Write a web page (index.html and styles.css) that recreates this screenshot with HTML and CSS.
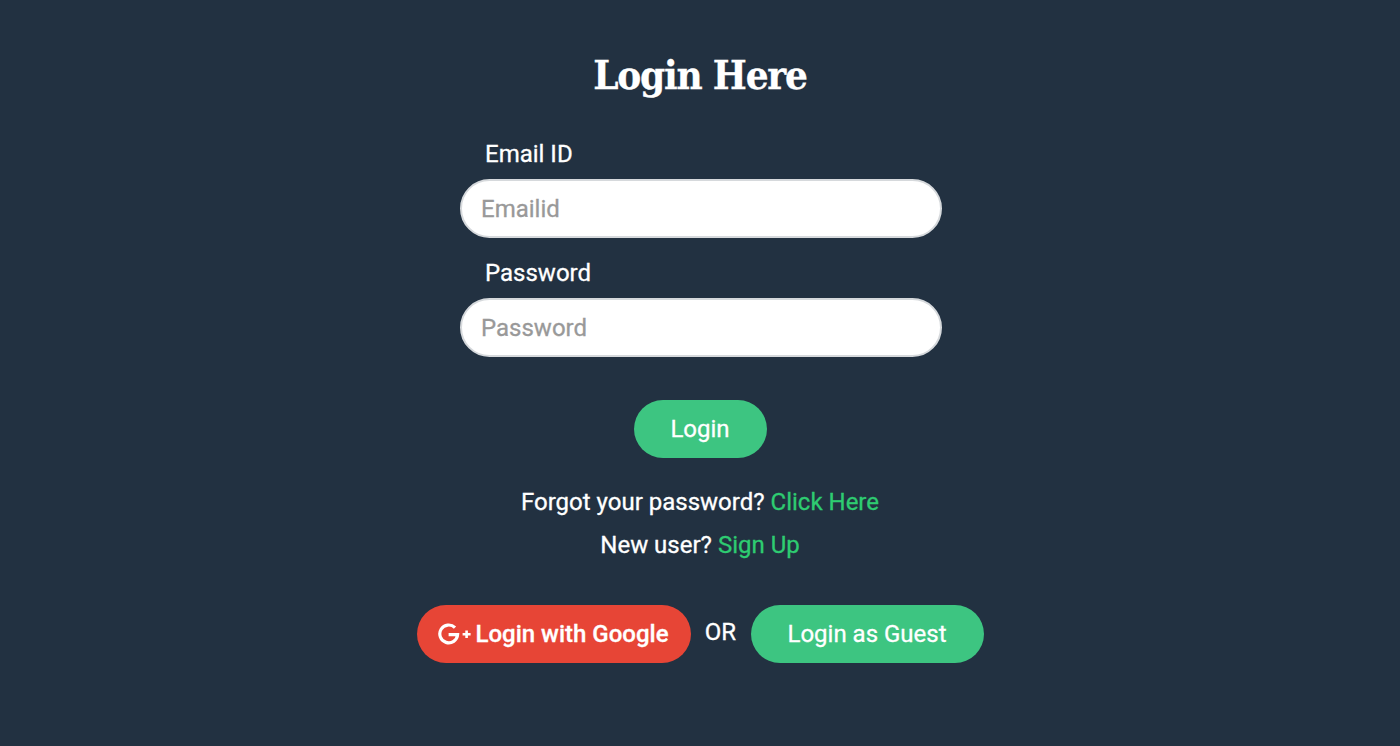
FILE: index.html
```html
<!DOCTYPE html>
<html lang="en">
<head>
<meta charset="UTF-8">
<meta name="viewport" content="width=device-width, initial-scale=1.0">
<title>Login Here</title>
<link rel="stylesheet" href="styles.css">
</head>
<body>
<div class="login">
  <h1 class="login-title">Login Here</h1>

  <form class="login-form">
    <div class="field">
      <label class="field-label" for="email">Email ID</label>
      <input type="text" class="field-input" id="email" placeholder="Emailid">
    </div>
    <div class="field">
      <label class="field-label" for="password">Password</label>
      <input type="password" class="field-input" id="password" placeholder="Password">
    </div>
    <button type="button" class="button green submit">Login</button>
  </form>

  <p class="note forgot">Forgot your password? <a href="#">Click Here</a></p>
  <p class="note signup">New user? <a href="#">Sign Up</a></p>

  <div class="alt-logins">
    <button type="button" class="button red google">
      <svg class="gplus" viewBox="0 0 33 22" width="33" height="22" aria-hidden="true">
        <path d="M17 4.6A8.9 8.9 0 1 0 19.6 11.6H10.6" fill="none" stroke="#fff" stroke-width="3.2"/>
        <path d="M24.6 11.2h8M28.6 7.4v7.6" fill="none" stroke="#fff" stroke-width="2.6"/>
      </svg>
      Login with Google
    </button>
    <span class="or">OR</span>
    <button type="button" class="button green guest">Login as Guest</button>
  </div>
</div>
</body>
</html>
```

FILE: styles.css
```css
body {
  margin: 0;
  height: 746px;
  overflow: hidden;
  background-color: #223141;
  color: #fff;
  font-family: Roboto, "Liberation Sans", sans-serif;
  font-size: 24px;
  -webkit-text-stroke: 0.3px;
}
.login {
  display: flex;
  flex-direction: column;
  align-items: center;
  padding-top: 50px;
}
.login-title {
  margin: 0;
  height: 50px;
  line-height: 50px;
  font-family: "DejaVu Serif Condensed", "DejaVu Serif", serif;
  font-size: 40px;
  font-weight: 700;
  letter-spacing: -1.2px;
}
.login-form {
  display: flex;
  flex-direction: column;
  align-items: center;
  margin-top: 40px;
}
.field {
  width: 482px;
  margin: 0 0 21px 2px;
}
.field-label {
  display: block;
  height: 28px;
  line-height: 28px;
  margin: 0 0 11px 25px;
  font-size: 24px;
}
.field-input {
  display: block;
  box-sizing: border-box;
  width: 482px;
  height: 59px;
  padding: 0 19px;
  border: 2px solid #d6d9dc;
  border-radius: 30px;
  background-color: #fff;
  font-family: inherit;
  font-size: 24px;
  color: #333;
  outline: none;
}
.field-input::placeholder {
  color: #999;
  opacity: 1;
}
.button {
  display: inline-flex;
  align-items: center;
  justify-content: center;
  box-sizing: border-box;
  height: 58px;
  border: none;
  border-radius: 29px;
  color: #fff;
  font-family: inherit;
  font-size: 24px;
  cursor: pointer;
}
.green {
  background-color: #3dc581;
}
.red {
  background-color: #e74536;
}
.submit {
  width: 133px;
  margin-top: 22px;
}
.note {
  margin: 0;
  height: 28px;
  line-height: 28px;
}
.note a {
  color: #2ecc71;
  text-decoration: none;
}
.forgot {
  margin-top: 30px;
}
.signup {
  margin-top: 15px;
}
.alt-logins {
  display: flex;
  align-items: flex-start;
  margin-top: 46px;
}
.google {
  width: 274px;
  font-weight: 500;
}
.gplus {
  flex-shrink: 0;
  margin-right: 4px;
}
.or {
  width: 60px;
  margin-top: 13px;
  text-align: center;
}
.guest {
  width: 233px;
}
```
